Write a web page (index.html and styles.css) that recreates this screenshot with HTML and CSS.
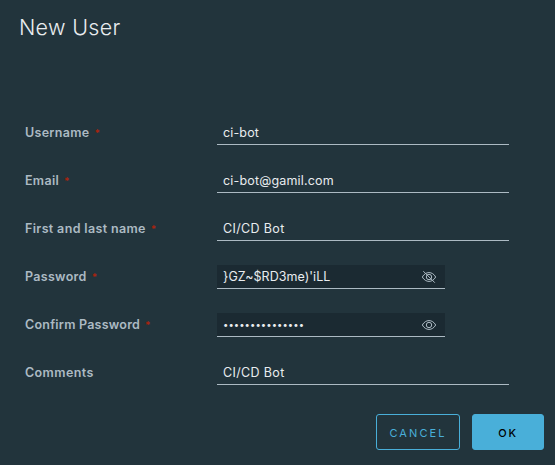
FILE: index.html
```html
<!DOCTYPE html>
<html lang="en">
<head>
<meta charset="utf-8">
<title>New User</title>
<link rel="stylesheet" href="styles.css">
</head>
<body>
<main class="modal">
  <h1 class="title">New User</h1>
  <form class="form">
    <div class="row"><label class="label username">Username</label><span class="req">*</span><div class="field"><span class="short">ci-bot</span></div></div>
    <div class="row"><label class="label email">Email</label><span class="req">*</span><div class="field"><span class="mail">ci-bot@gamil.com</span></div></div>
    <div class="row"><label class="label fullname">First and last name</label><span class="req">*</span><div class="field"><span class="bot">CI/CD Bot</span></div></div>
    <div class="row"><label class="label password">Password</label><span class="req">*</span><div class="field secret"><span class="plain">}GZ~$RD3me)'iLL</span>
      <svg class="eye" viewBox="0 0 16 16"><path d="M1.3 8C4.6 2.1 11.4 2.1 14.7 8C11.4 13.9 4.6 13.9 1.3 8Z"/><circle cx="8" cy="8" r="2.7"/><path d="M2.3 2.2L13.8 13.7"/></svg></div></div>
    <div class="row"><label class="label confirm">Confirm Password</label><span class="req">*</span><div class="field secret"><span class="dots">•••••••••••••••</span>
      <svg class="eye" viewBox="0 0 16 16"><path d="M1.3 8C4.6 2.1 11.4 2.1 14.7 8C11.4 13.9 4.6 13.9 1.3 8Z"/><circle cx="8" cy="8" r="2.7"/></svg></div></div>
    <div class="row"><label class="label comments">Comments</label><div class="field"><span class="bot">CI/CD Bot</span></div></div>
  </form>
  <footer class="actions">
    <button class="btn outline" type="button">CANCEL</button>
    <button class="btn primary" type="button">OK</button>
  </footer>
</main>
</body>
</html>
```
FILE: styles.css
```css
* { box-sizing: border-box; }
body {
  margin: 0;
  background: #22343c;
  font-family: Inter, "Liberation Sans", sans-serif;
}
.modal { width: 555px; height: 465px; overflow: hidden; }
.title {
  margin: 0;
  padding: 12px 0 0 19px;
  height: 121px;
  font-size: 21.5px;
  line-height: 31px;
  font-weight: 300;
  letter-spacing: 0.3px;
  color: #e9ecef;
}
.form {
  display: grid;
  gap: 24px;
  padding-left: 25px;
}
.row {
  display: flex;
  width: 484px;
  height: 24px;
  line-height: 24px;
  font-size: 12.5px;
  white-space: nowrap;
}
.label { font-weight: 600; letter-spacing: 0.3px; color: #acbac3; }
.username { letter-spacing: 0.3px; }
.confirm { letter-spacing: 0.23px; }
.fullname { letter-spacing: 0.35px; }
.comments { letter-spacing: 0.4px; }
.req { margin-left: 5px; font-size: 10px; font-weight: 700; color: #a82410; }
.field {
  display: flex;
  width: 292px;
  height: 24px;
  margin-left: auto;
  padding-left: 6px;
  border-bottom: 1px solid #acbac3;
  color: #e9ecef;
}
.short { letter-spacing: 0.15px; }
.mail { letter-spacing: 0.17px; }
.bot { letter-spacing: 0.35px; }
.plain { letter-spacing: 0.05px; }
.dots { padding-top: 1px; font-size: 9.5px; letter-spacing: 0.06px; }
.secret {
  width: 228px;
  margin-right: 64px;
  background: #1b2a32;
  align-items: center;
}
.eye {
  width: 16px;
  height: 16px;
  margin: 0 8px 0 auto;
  fill: none;
  stroke: #acbac3;
  stroke-width: 1;
}
.actions {
  display: flex;
  justify-content: flex-end;
  gap: 12px;
  padding: 29px 11px 0 0;
}
.btn {
  width: 84px;
  height: 36px;
  padding: 2px 0 0;
  border: 1px solid #49afd9;
  border-radius: 3px;
  font: 400 11px/32px Inter, "Liberation Sans", sans-serif;
  letter-spacing: 2.1px;
}
.outline { background: transparent; color: #49afd9; }
.primary { width: 72px; background: #49afd9; color: #000; font-weight: 500; letter-spacing: 1.7px; }
```
